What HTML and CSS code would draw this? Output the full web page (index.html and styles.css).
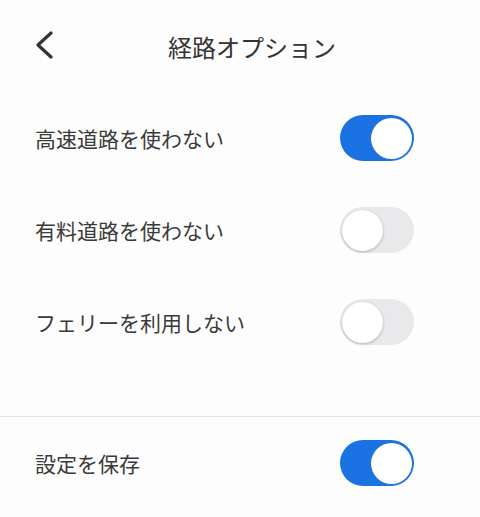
FILE: index.html
```html
<!DOCTYPE html>
<html lang="ja">
<head>
    <meta charset="UTF-8">
    <meta name="viewport" content="width=device-width, initial-scale=1.0">
    <title>経路オプション</title>
    <link rel="stylesheet" href="styles.css">
</head>
<body>
    <header class="topbar">
        <button class="back" aria-label="戻る">
            <svg width="20" height="30" viewBox="0 0 20 30">
                <path d="M16 2 L3 14 L16 26" fill="none" stroke="#333" stroke-width="3.2" stroke-linecap="round" stroke-linejoin="round"/>
            </svg>
        </button>
        <h1 class="title">経路オプション</h1>
    </header>

    <section class="options">
        <div class="row">
            <span class="label">高速道路を使わない</span>
            <span class="toggle on"><span class="knob"></span></span>
        </div>
        <div class="row">
            <span class="label">有料道路を使わない</span>
            <span class="toggle"><span class="knob"></span></span>
        </div>
        <div class="row">
            <span class="label">フェリーを利用しない</span>
            <span class="toggle"><span class="knob"></span></span>
        </div>
    </section>

    <section class="options saved">
        <div class="row">
            <span class="label">設定を保存</span>
            <span class="toggle on"><span class="knob"></span></span>
        </div>
    </section>
</body>
</html>
```

FILE: styles.css
```css
body {
    margin: 0;
    background-color: #fdfdfd;
    font-family: "Noto Sans CJK JP", "Noto Sans", sans-serif;
    color: #333;
}
.topbar {
    height: 92px;
    display: flex;
    align-items: center;
    padding: 0 35px;
}
.back {
    border: none;
    background: none;
    padding: 0;
    width: 20px;
    height: 30px;
    display: flex;
}
.title {
    margin: 0 0 0 113px;
    font-size: 24px;
    font-weight: normal;
    color: #333;
}
.options {
    padding-bottom: 48px;
}
.saved {
    border-top: 1px solid #e4e4e4;
    padding-bottom: 0;
}
.row {
    height: 92px;
    display: flex;
    align-items: center;
    justify-content: space-between;
    padding: 0 66px 0 35px;
}
.label {
    font-size: 21px;
    color: #3a3a3a;
}
.toggle {
    width: 74px;
    height: 46px;
    border-radius: 23px;
    background-color: #e9e9eb;
    display: flex;
    align-items: center;
    padding: 0 2px;
    box-sizing: border-box;
}
.toggle.on {
    background-color: #1a72e3;
    justify-content: flex-end;
}
.knob {
    width: 41px;
    height: 41px;
    border-radius: 50%;
    background-color: #fff;
    box-shadow: 0 1px 3px rgba(0, 0, 0, 0.25);
}
.toggle.on .knob {
    box-shadow: none;
}
```
